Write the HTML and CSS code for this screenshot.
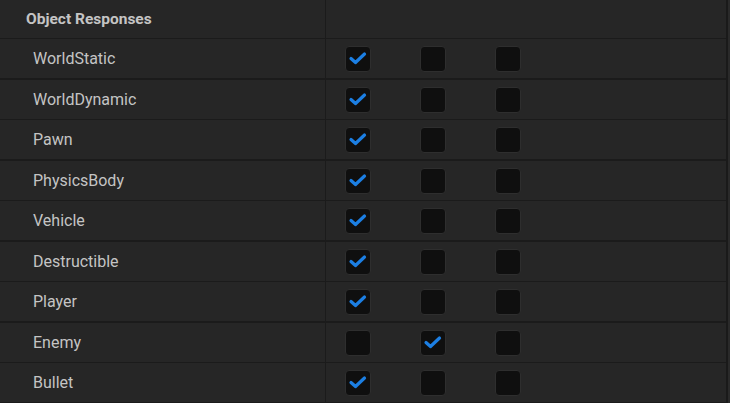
FILE: index.html
```html
<!DOCTYPE html>
<html lang="en">
<head>
    <meta charset="UTF-8">
    <title>Object Responses</title>
    <link rel="stylesheet" href="styles.css">
</head>
<body>
<div class="panel">
    <div class="row header">
        <div class="label">Object Responses</div>
        <div class="checks"></div>
    </div>
    <div class="row">
        <div class="label">WorldStatic</div>
        <div class="checks"><span class="box"><svg viewBox="0 0 26 26"><path d="M6 13.5 L10.5 17.5 L19.5 9"/></svg></span><span class="box"></span><span class="box"></span></div>
    </div>
    <div class="row">
        <div class="label">WorldDynamic</div>
        <div class="checks"><span class="box"><svg viewBox="0 0 26 26"><path d="M6 13.5 L10.5 17.5 L19.5 9"/></svg></span><span class="box"></span><span class="box"></span></div>
    </div>
    <div class="row">
        <div class="label">Pawn</div>
        <div class="checks"><span class="box"><svg viewBox="0 0 26 26"><path d="M6 13.5 L10.5 17.5 L19.5 9"/></svg></span><span class="box"></span><span class="box"></span></div>
    </div>
    <div class="row">
        <div class="label">PhysicsBody</div>
        <div class="checks"><span class="box"><svg viewBox="0 0 26 26"><path d="M6 13.5 L10.5 17.5 L19.5 9"/></svg></span><span class="box"></span><span class="box"></span></div>
    </div>
    <div class="row">
        <div class="label">Vehicle</div>
        <div class="checks"><span class="box"><svg viewBox="0 0 26 26"><path d="M6 13.5 L10.5 17.5 L19.5 9"/></svg></span><span class="box"></span><span class="box"></span></div>
    </div>
    <div class="row">
        <div class="label">Destructible</div>
        <div class="checks"><span class="box"><svg viewBox="0 0 26 26"><path d="M6 13.5 L10.5 17.5 L19.5 9"/></svg></span><span class="box"></span><span class="box"></span></div>
    </div>
    <div class="row">
        <div class="label">Player</div>
        <div class="checks"><span class="box"><svg viewBox="0 0 26 26"><path d="M6 13.5 L10.5 17.5 L19.5 9"/></svg></span><span class="box"></span><span class="box"></span></div>
    </div>
    <div class="row">
        <div class="label">Enemy</div>
        <div class="checks"><span class="box"></span><span class="box"><svg viewBox="0 0 26 26"><path d="M6 13.5 L10.5 17.5 L19.5 9"/></svg></span><span class="box"></span></div>
    </div>
    <div class="row">
        <div class="label">Bullet</div>
        <div class="checks"><span class="box"><svg viewBox="0 0 26 26"><path d="M6 13.5 L10.5 17.5 L19.5 9"/></svg></span><span class="box"></span><span class="box"></span></div>
    </div>
</div>
</body>
</html>
```

FILE: styles.css
```css
body {
    margin: 0;
    background-color: #2a2a2a;
    font-family: Roboto, "Liberation Sans", sans-serif;
    color: #c4c4c4;
}
.panel {
    width: 726px;
    background-color: #262626;
    border-right: 2px solid #1a1a1a;
}
.row {
    display: flex;
    height: 39px;
    border-bottom: 2px solid #1b1b1b;
}
.row:nth-child(odd) {
    border-bottom-width: 1px;
}
.row.header {
    height: 38px;
}
.label {
    width: 326px;
    border-right: 1px solid #1b1b1b;
    display: flex;
    align-items: center;
    padding-left: 33px;
    box-sizing: border-box;
    font-size: 16px;
}
.header .label {
    padding-left: 26px;
    font-size: 15.5px;
    font-weight: bold;
}
.checks {
    display: flex;
    align-items: center;
    gap: 49px;
    padding-left: 19px;
}
.box {
    width: 26px;
    height: 26px;
    box-sizing: border-box;
    background-color: #0f0f0f;
    border: 1.5px solid #2e2e2e;
    border-radius: 4px;
    position: relative;
}
.box svg {
    position: absolute;
    left: -1.5px;
    top: -1.5px;
    width: 26px;
    height: 26px;
    fill: none;
    stroke: #1c7fe3;
    stroke-width: 3.2;
    stroke-linecap: round;
    stroke-linejoin: round;
}
```
